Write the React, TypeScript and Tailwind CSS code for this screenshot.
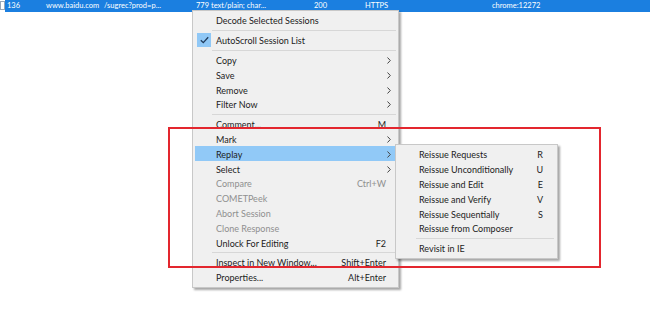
import React from "react";

type Item =
  | { sep: true }
  | {
      sep?: false;
      label: string;
      shortcut?: string;
      arrow?: boolean;
      disabled?: boolean;
      checked?: boolean;
      active?: boolean;
    };

const MAIN_ITEMS: Item[] = [
  { label: "Decode Selected Sessions" },
  { sep: true },
  { label: "AutoScroll Session List", checked: true },
  { sep: true },
  { label: "Copy", arrow: true },
  { label: "Save", arrow: true },
  { label: "Remove", arrow: true },
  { label: "Filter Now", arrow: true },
  { sep: true },
  { label: "Comment...", shortcut: "M" },
  { label: "Mark", arrow: true },
  { label: "Replay", arrow: true, active: true },
  { label: "Select", arrow: true },
  { label: "Compare", shortcut: "Ctrl+W", disabled: true },
  { label: "COMETPeek", disabled: true },
  { label: "Abort Session", disabled: true },
  { label: "Clone Response", disabled: true },
  { label: "Unlock For Editing", shortcut: "F2" },
  { sep: true },
  { label: "Inspect in New Window...", shortcut: "Shift+Enter" },
  { label: "Properties...", shortcut: "Alt+Enter" },
];

const REPLAY_ITEMS: Item[] = [
  { label: "Reissue Requests", shortcut: "R" },
  { label: "Reissue Unconditionally", shortcut: "U" },
  { label: "Reissue and Edit", shortcut: "E" },
  { label: "Reissue and Verify", shortcut: "V" },
  { label: "Reissue Sequentially", shortcut: "S" },
  { label: "Reissue from Composer" },
  { sep: true },
  { label: "Revisit in IE" },
];

function Chevron() {
  return (
    <svg width="4" height="7" viewBox="0 0 4 7" className="shrink-0">
      <path d="M0.5 0.5 L3.3 3.5 L0.5 6.5" fill="none" stroke="#444" strokeWidth="1" />
    </svg>
  );
}

function CheckMark() {
  return (
    <div className="w-[14px] h-[14px] bg-[#90c8f6] flex items-center justify-center">
      <svg width="9" height="8" viewBox="0 0 9 8">
        <path d="M0.8 4.2 L3.3 6.6 L8.2 1.2" fill="none" stroke="#1f3a5a" strokeWidth="1.3" />
      </svg>
    </div>
  );
}

function MenuList({ items, sub }: { items: Item[]; sub?: boolean }) {
  return (
    <div className="flex flex-col">
      {items.map((item, i) =>
        item.sep ? (
          <div key={i} className="h-[5px] flex items-center">
            <div className={sub ? "ml-[18px] mr-[1px] flex-1 h-px bg-[#d7d7d7]" : "ml-[17px] flex-1 h-px bg-[#d7d7d7]"} />
          </div>
        ) : (
          <div
            key={i}
            className={
              "relative h-[14.8px] flex items-center " +
              (item.active ? "bg-[#91c9f7] " : "") +
              (item.disabled ? "text-[#8f8f8f]" : "text-[#1c1c1c]")
            }
          >
            <div className={sub ? "w-[21px] shrink-0" : "w-[21px] shrink-0 pl-[2px]"}>
              {item.checked && <CheckMark />}
            </div>
            <span className="flex-1 whitespace-nowrap leading-none pt-px">{item.label}</span>
            {item.shortcut && (
              <span className={sub ? "pr-[12px] leading-none pt-px" : "pr-[10px] leading-none pt-px"}>{item.shortcut}</span>
            )}
            {item.arrow && (
              <div className="pr-[5px] pt-px">
                <Chevron />
              </div>
            )}
          </div>
        )
      )}
    </div>
  );
}

export default function App() {
  return (
    <div
      className="relative w-[650px] h-[310px] bg-white overflow-hidden"
      style={{ fontFamily: "Lato, 'Liberation Sans', sans-serif" }}
    >
      {/* selected session row */}
      <div className="flex h-[12px] items-stretch">
        <div className="w-[5px] border border-[#9aa8b8] bg-white mt-[1px] h-[9px]" />
        <div className="flex-1 bg-[#1b7fe0] flex items-center text-white text-[7.5px] leading-none whitespace-nowrap">
          <span className="w-[41px] shrink-0 pl-[2px]">136</span>
          <span className="w-[58px] shrink-0">www.baidu.com</span>
          <span className="w-[92px] shrink-0">/sugrec?prod=p...</span>
          <span className="w-[15px] shrink-0">779</span>
          <span className="w-[103px] shrink-0">text/plain; char...</span>
          <span className="w-[51px] shrink-0">200</span>
          <span className="w-[127px] shrink-0">HTTPS</span>
          <span className="shrink-0">chrome:12272</span>
        </div>
      </div>

      {/* context menu */}
      <div className="absolute left-[192px] top-[10px] w-[207px] bg-[#f0f0f0] border border-[#c8c8c8] p-[2px] text-[9px] shadow-[2px_2px_2px_rgba(0,0,0,0.35)]">
        <MenuList items={MAIN_ITEMS} />
      </div>

      {/* replay submenu */}
      <div className="absolute left-[395px] top-[144px] w-[163px] bg-[#f0f0f0] border border-[#c8c8c8] p-[2px] text-[9px] shadow-[2px_2px_2px_rgba(0,0,0,0.35)]">
        <MenuList items={REPLAY_ITEMS} sub />
      </div>

      {/* annotation box */}
      <div className="absolute left-[168px] top-[127px] w-[433px] h-[141px] border-2 border-[#e3262e]" />
    </div>
  );
}
